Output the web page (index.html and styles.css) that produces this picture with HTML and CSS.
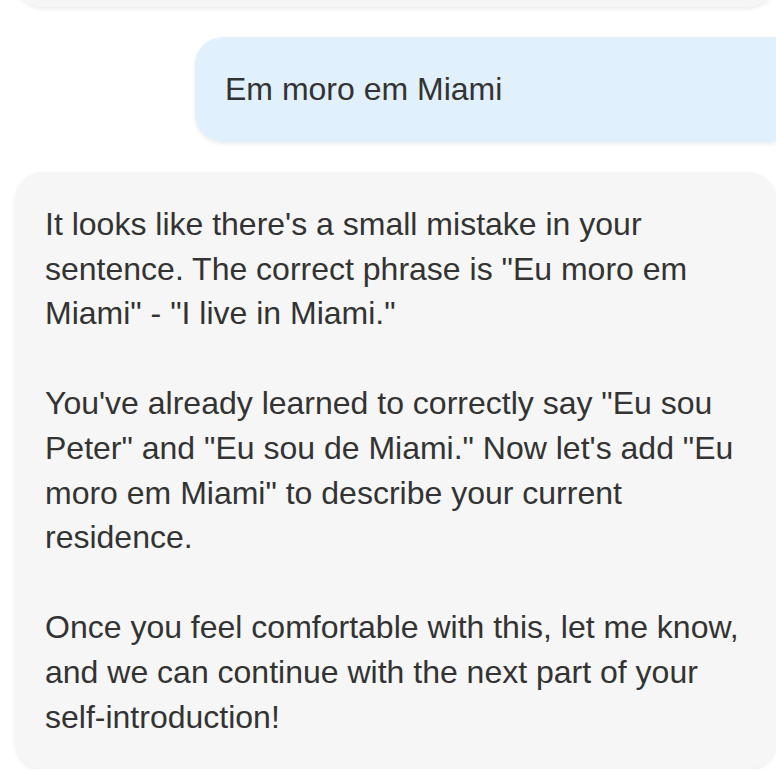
FILE: index.html
```html
<!DOCTYPE html>
<html lang="en">
<head>
<meta charset="utf-8">
<title>Chat</title>
<link rel="stylesheet" href="styles.css">
</head>
<body>
<div class="chat">
  <div class="bubble bot prev"></div>
  <div class="bubble user">
    <p>Em moro em Miami</p>
  </div>
  <div class="bubble bot">
    <p>It looks like there's a small mistake in your sentence. The correct phrase is "Eu moro em Miami" - "I live in Miami."</p>
    <p>You've already learned to correctly say "Eu sou Peter" and "Eu sou de Miami." Now let's add "Eu moro em Miami" to describe your current residence.</p>
    <p>Once you feel comfortable with this, let me know, and we can continue with the next part of your self-introduction!</p>
  </div>
</div>
</body>
</html>
```
FILE: styles.css
```css
html, body {
  margin: 0;
  padding: 0;
  background: #ffffff;
  overflow: hidden;
}
body {
  font-family: "Liberation Sans", Arial, sans-serif;
  font-size: 32px;
  line-height: 1.4;
  color: #333333;
}
.chat {
  display: flex;
  flex-direction: column;
  gap: 30px;
  padding-left: 15px;
  width: 761px;
}
.bubble {
  padding: 30px;
  border-radius: 28px;
  box-shadow: 0 2px 4px rgba(0, 0, 0, 0.08);
}
.bubble p {
  margin: 0 0 1.4em;
}
.bubble p:last-child {
  margin-bottom: 0;
}
.bot {
  background: #f6f6f6;
}
.prev {
  height: 45px;
  margin-top: -98px;
}
.user {
  background: #e1f0fd;
  margin-left: 180px;
  border-radius: 28px 0 0 28px;
}
```
